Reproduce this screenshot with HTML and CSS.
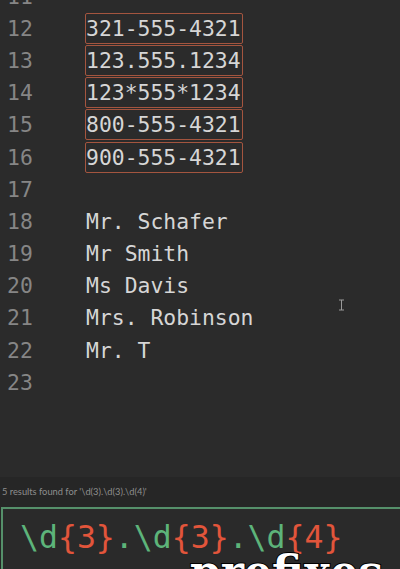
FILE: index.html
```html
<!DOCTYPE html>
<html>
<head>
<meta charset="utf-8">
<link rel="stylesheet" href="styles.css">
</head>
<body>
<div class="app">
  <div class="editor">
    <div class="lines">
      <div class="row"><span class="num">11</span><span class="code"></span></div>
      <div class="row"><span class="num">12</span><span class="code"><span class="match">321-555-4321</span></span></div>
      <div class="row"><span class="num">13</span><span class="code"><span class="match">123.555.1234</span></span></div>
      <div class="row"><span class="num">14</span><span class="code"><span class="match">123*555*1234</span></span></div>
      <div class="row"><span class="num">15</span><span class="code"><span class="match">800-555-4321</span></span></div>
      <div class="row"><span class="num">16</span><span class="code"><span class="match">900-555-4321</span></span></div>
      <div class="row"><span class="num">17</span><span class="code"></span></div>
      <div class="row"><span class="num">18</span><span class="code">Mr. Schafer</span></div>
      <div class="row"><span class="num">19</span><span class="code">Mr Smith</span></div>
      <div class="row"><span class="num">20</span><span class="code">Ms Davis</span></div>
      <div class="row"><span class="num">21</span><span class="code">Mrs. Robinson</span></div>
      <div class="row"><span class="num">22</span><span class="code">Mr. T</span></div>
      <div class="row"><span class="num">23</span><span class="code"></span></div>
    </div>
    <svg class="ibeam" width="7" height="12" viewBox="0 0 7 12"><path d="M1 1h5M3.5 1v10M1 11h5" stroke="#9a9a9a" stroke-width="1" fill="none"/></svg>
  </div>
  <div class="panel">
    <div class="status">5 results found for '\d(3).\d(3).\d(4)'</div>
    <div class="search"><span class="esc">\d</span><span class="q">{3}</span><span class="esc">.\d</span><span class="q">{3}</span><span class="esc">.\d</span><span class="q">{4}</span></div>
  </div>
  <div class="caption">prefixes</div>
</div>
</body>
</html>
```

FILE: styles.css
```css
html, body {
  margin: 0;
  padding: 0;
  background: #2b2b2b;
}
.app {
  position: relative;
  width: 400px;
  height: 569px;
  overflow: hidden;
  display: flex;
  flex-direction: column;
}
.editor {
  position: relative;
  height: 477px;
  flex: none;
  overflow: hidden;
  background: #2b2b2b;
}
.lines {
  margin-top: -20px;
  font-family: "DejaVu Sans Mono", monospace;
  font-size: 21.4px;
}
.row {
  display: flex;
  align-items: center;
  height: 32.2px;
}
.num {
  width: 79px;
  padding-left: 7px;
  color: #868686;
  flex: none;
}
.code {
  color: #d6d6d6;
  white-space: pre;
}
.match {
  display: inline-block;
  height: 29px;
  line-height: 29px;
  margin-left: -1px;
  padding: 0 1px 0 0;
  border: 1px solid #a4553f;
  border-radius: 2px;
}
.ibeam {
  position: absolute;
  left: 338px;
  top: 299px;
}
.panel {
  flex: 1;
  background: #262626;
  display: flex;
  flex-direction: column;
}
.status {
  height: 30px;
  line-height: 30px;
  padding-left: 2px;
  font-family: Lato, "Liberation Sans", sans-serif;
  font-size: 9.3px;
  color: #8e8e8e;
}
.search {
  margin-left: 1px;
  width: 420px;
  flex: 1;
  border: 2px solid #55906a;
  border-bottom: none;
  background: #2a2a2a;
  padding-left: 17px;
  padding-top: 8px;
  font-family: "DejaVu Sans Mono", monospace;
  font-size: 31.5px;
  line-height: 40px;
  white-space: pre;
}
.esc {
  color: #5db47a;
}
.q {
  color: #e2553b;
}
.caption {
  position: absolute;
  left: 190px;
  top: 550px;
  font-family: "DejaVu Serif", serif;
  font-weight: bold;
  font-size: 44px;
  line-height: 1;
  color: #ffffff;
  -webkit-text-stroke: 2px #000;
  paint-order: stroke fill;
  white-space: nowrap;
}
```
